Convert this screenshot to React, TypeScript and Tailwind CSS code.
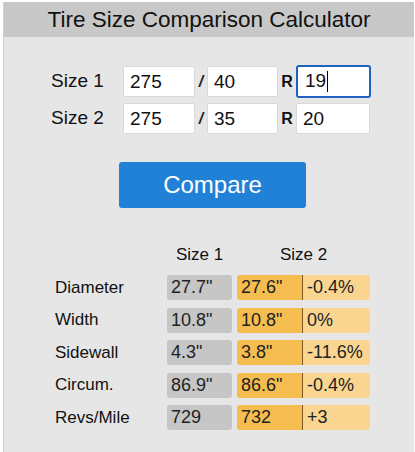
import React from 'react';

const ROWS = [
    { label: 'Diameter', a: '27.7"', b: '27.6"', diff: '-0.4%' },
    { label: 'Width', a: '10.8"', b: '10.8"', diff: '0%' },
    { label: 'Sidewall', a: '4.3"', b: '3.8"', diff: '-11.6%' },
    { label: 'Circum.', a: '86.9"', b: '86.6"', diff: '-0.4%' },
    { label: 'Revs/Mile', a: '729', b: '732', diff: '+3' },
];

const SIZES = [
    { label: 'Size 1', width: '275', ratio: '40', rim: '19', focused: true },
    { label: 'Size 2', width: '275', ratio: '35', rim: '20', focused: false },
];

function Field({ value, className }: { value: string; className: string }) {
    return (
        <input
            readOnly
            value={value}
            className={`h-[31px] bg-white border border-[#d9d9d9] rounded-[2px] pl-[6px] text-[19px] text-[#111] outline-none ${className}`}
        />
    );
}

export default function App() {
    return (
        <div className="w-[415px] h-[452px] bg-white overflow-hidden" style={{ fontFamily: '"Liberation Sans", Arial, sans-serif' }}>
            <div className="ml-[3px] mr-[1px] mt-[2px] h-[450px] bg-[#e6e6e6] border-l border-[#d2d2d2]">
                {/* Title */}
                <div className="h-[35px] bg-[#c8c8c8] flex items-center justify-center text-[22.5px] text-[#111]">
                    Tire Size Comparison Calculator
                </div>

                {/* Size inputs */}
                <div className="pt-[29px] pl-[47px] flex flex-col gap-[6px]">
                    {SIZES.map(s => (
                        <div key={s.label} className="flex items-center">
                            <span className="w-[72px] text-[19px] text-[#111]">{s.label}</span>
                            <Field value={s.width} className="w-[72px]" />
                            <span className="w-[12px] text-center text-[16px] font-bold italic text-[#222]">/</span>
                            <Field value={s.ratio} className="w-[71px]" />
                            <span className="w-[18px] text-center text-[16px] font-bold text-[#111]">R</span>
                            {s.focused ? (
                                <div className="w-[75px] h-[33px] -my-[1px] bg-white border-2 border-[#1e62c0] rounded-[3px] pl-[7px] flex items-center text-[19px] text-[#111]">
                                    19<span className="w-px h-[21px] bg-black ml-[1px]" />
                                </div>
                            ) : (
                                <Field value={s.rim} className="w-[74px]" />
                            )}
                        </div>
                    ))}
                </div>

                {/* Compare button */}
                <div className="pt-[28px] pl-[115px]">
                    <button className="w-[187px] h-[46px] rounded-[3px] bg-[#2181d6] text-white text-[24px] flex items-center justify-center">
                        Compare
                    </button>
                </div>

                {/* Results */}
                <div className="pt-[37px] pl-[51px] text-[#111]">
                    <div className="flex h-[20px] items-center text-[17px] mb-[10px]">
                        <span className="w-[112px]" />
                        <span className="w-[65px] text-center">Size 1</span>
                        <span className="w-[133px] ml-[5px] text-center">Size 2</span>
                    </div>
                    <div className="flex flex-col gap-[7.5px]">
                        {ROWS.map(r => (
                            <div key={r.label} className="flex items-center h-[25px]">
                                <span className="w-[112px] text-[17px]">{r.label}</span>
                                <span className="w-[65px] h-full rounded-[3px] bg-[#c6c6c6] pl-[4px] flex items-center text-[18px] text-[#222]">{r.a}</span>
                                <div className="ml-[5px] w-[133px] h-full rounded-[3px] overflow-hidden flex text-[18px] text-[#222]">
                                    <span className="w-[66px] bg-[#f5bc4f] border-r border-[#7a5a20] pl-[4px] flex items-center">{r.b}</span>
                                    <span className="flex-1 bg-[#f9d590] pl-[4px] flex items-center">{r.diff}</span>
                                </div>
                            </div>
                        ))}
                    </div>
                </div>
            </div>
        </div>
    );
}
